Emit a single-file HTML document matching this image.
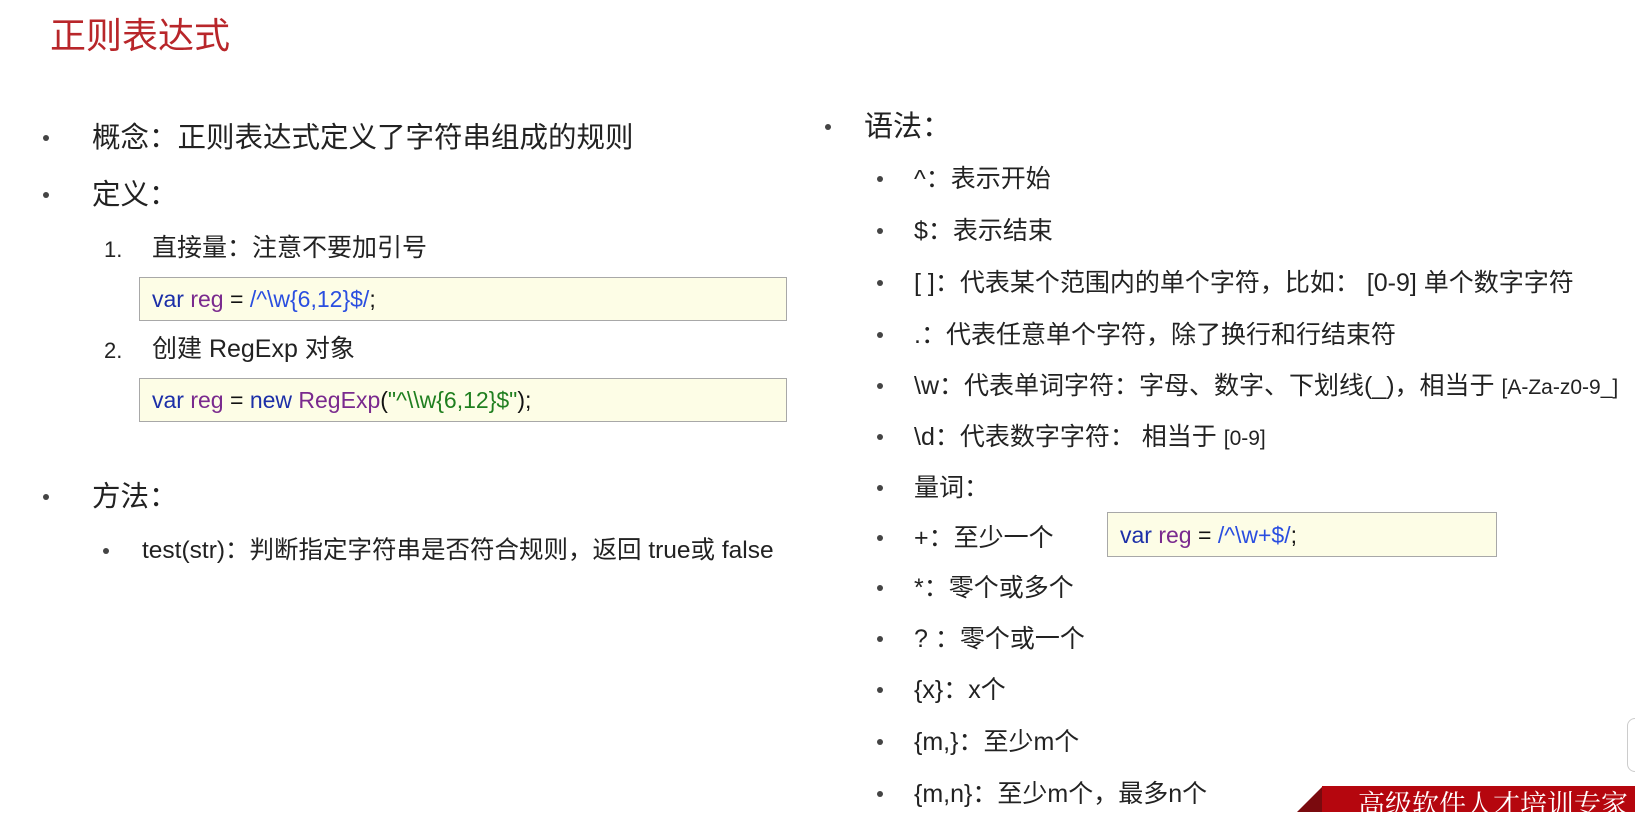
<!DOCTYPE html>
<html><head><meta charset="utf-8"><style>
body{margin:0;width:1635px;height:812px;background:#fff;position:relative;overflow:hidden;font-family:"Liberation Sans","Noto Sans CJK SC",sans-serif;color:#222}
.a{position:absolute;white-space:nowrap;line-height:1}
.d{position:absolute;width:6px;height:6px;border-radius:50%;background:#444}
.box{position:absolute;background:#fdfde6;border:1.5px solid #a8a8a8;box-sizing:border-box}
.k{color:#1c2fa8}.v{color:#7a2a8e}.r{color:#2a4ee0}.s{color:#1f7f1f}.o{color:#111}
.c{font-size:23px;letter-spacing:0px}
</style></head><body>
<div class="a" style="left:50px;top:18px;font-size:36px;color:#b8262a">正则表达式</div>

<div class="d" style="left:43px;top:135px"></div><div class="a" style="left:92px;top:124px;font-size:28.5px">概念：正则表达式定义了字符串组成的规则</div>
<div class="d" style="left:43px;top:192px"></div><div class="a" style="left:92px;top:181px;font-size:28.5px">定义：</div>
<div class="a" style="left:104px;top:239px;font-size:22px">1.</div><div class="a" style="left:152px;top:236px;font-size:25px">直接量：注意不要加引号</div>
<div class="box" style="left:139px;top:277px;width:648px;height:44px"></div>
<div class="a c" style="left:152px;top:288px"><span class="k">var</span> <span class="v">reg</span> <span class="o">=</span> <span class="r">/^\w{6,12}$/</span><span class="o">;</span></div>
<div class="a" style="left:104px;top:340px;font-size:22px">2.</div><div class="a" style="left:152px;top:337px;font-size:25px">创建 RegExp 对象</div>
<div class="box" style="left:139px;top:378px;width:648px;height:44px"></div>
<div class="a c" style="left:152px;top:389px"><span class="k">var</span> <span class="v">reg</span> <span class="o">=</span> <span class="k">new</span> <span class="v">RegExp</span><span class="o">(</span><span class="s">"^\\w{6,12}$"</span><span class="o">);</span></div>
<div class="d" style="left:43px;top:494px"></div><div class="a" style="left:92px;top:483px;font-size:28.5px">方法：</div>
<div class="d" style="left:103px;top:548px"></div><div class="a" style="left:142px;top:539px;font-size:24.5px">test(str)：判断指定字符串是否符合规则，返回 true或 false</div>

<div class="d" style="left:825px;top:124px"></div><div class="a" style="left:864px;top:113px;font-size:29px">语法：</div>
<div class="d" style="left:877px;top:176px"></div><div class="a" style="left:914px;top:167px;font-size:25px">^：表示开始</div>
<div class="d" style="left:877px;top:228px"></div><div class="a" style="left:914px;top:219px;font-size:25px">$：表示结束</div>
<div class="d" style="left:877px;top:280px"></div><div class="a" style="left:914px;top:271px;font-size:25px">[ ]：代表某个范围内的单个字符，比如： [0-9] 单个数字字符</div>
<div class="d" style="left:877px;top:332px"></div><div class="a" style="left:914px;top:323px;font-size:25px">.：代表任意单个字符，除了换行和行结束符</div>
<div class="d" style="left:877px;top:383px"></div><div class="a" style="left:914px;top:374px;font-size:25px">\w：代表单词字符：字母、数字、下划线(_)，相当于 <span style="font-size:21px">[A-Za-z0-9_]</span></div>
<div class="d" style="left:877px;top:434px"></div><div class="a" style="left:914px;top:425px;font-size:25px">\d：代表数字字符： 相当于 <span style="font-size:21px">[0-9]</span></div>
<div class="d" style="left:877px;top:485px"></div><div class="a" style="left:914px;top:476px;font-size:25px">量词：</div>
<div class="d" style="left:877px;top:535px"></div><div class="a" style="left:914px;top:526px;font-size:25px">+：至少一个</div>
<div class="box" style="left:1107px;top:512px;width:390px;height:45px"></div>
<div class="a c" style="left:1120px;top:524px"><span class="k">var</span> <span class="v">reg</span> <span class="o">=</span> <span class="r">/^\w+$/</span><span class="o">;</span></div>
<div class="d" style="left:877px;top:585px"></div><div class="a" style="left:914px;top:576px;font-size:25px">*：零个或多个</div>
<div class="d" style="left:877px;top:636px"></div><div class="a" style="left:914px;top:627px;font-size:25px">? ：零个或一个</div>
<div class="d" style="left:877px;top:687px"></div><div class="a" style="left:914px;top:678px;font-size:25px">{x}：x个</div>
<div class="d" style="left:877px;top:739px"></div><div class="a" style="left:914px;top:730px;font-size:25px">{m,}：至少m个</div>
<div class="d" style="left:877px;top:791px"></div><div class="a" style="left:914px;top:782px;font-size:25px">{m,n}：至少m个，最多n个</div>

<div style="position:absolute;left:1297px;top:786px;width:0;height:0;border-bottom:26px solid #7a0a0e;border-left:26px solid transparent"></div>
<div style="position:absolute;left:1322px;top:786px;width:313px;height:26px;background:#b5060e"></div>
<div class="a" style="left:1358px;top:789px;font-size:27px;color:#fff;font-family:'Noto Serif CJK SC',serif">高级软件人才培训专家</div>
<div style="position:absolute;left:1627px;top:718px;width:20px;height:52px;border:1px solid #ccc;border-radius:8px;background:#fff"></div>
</body></html>
